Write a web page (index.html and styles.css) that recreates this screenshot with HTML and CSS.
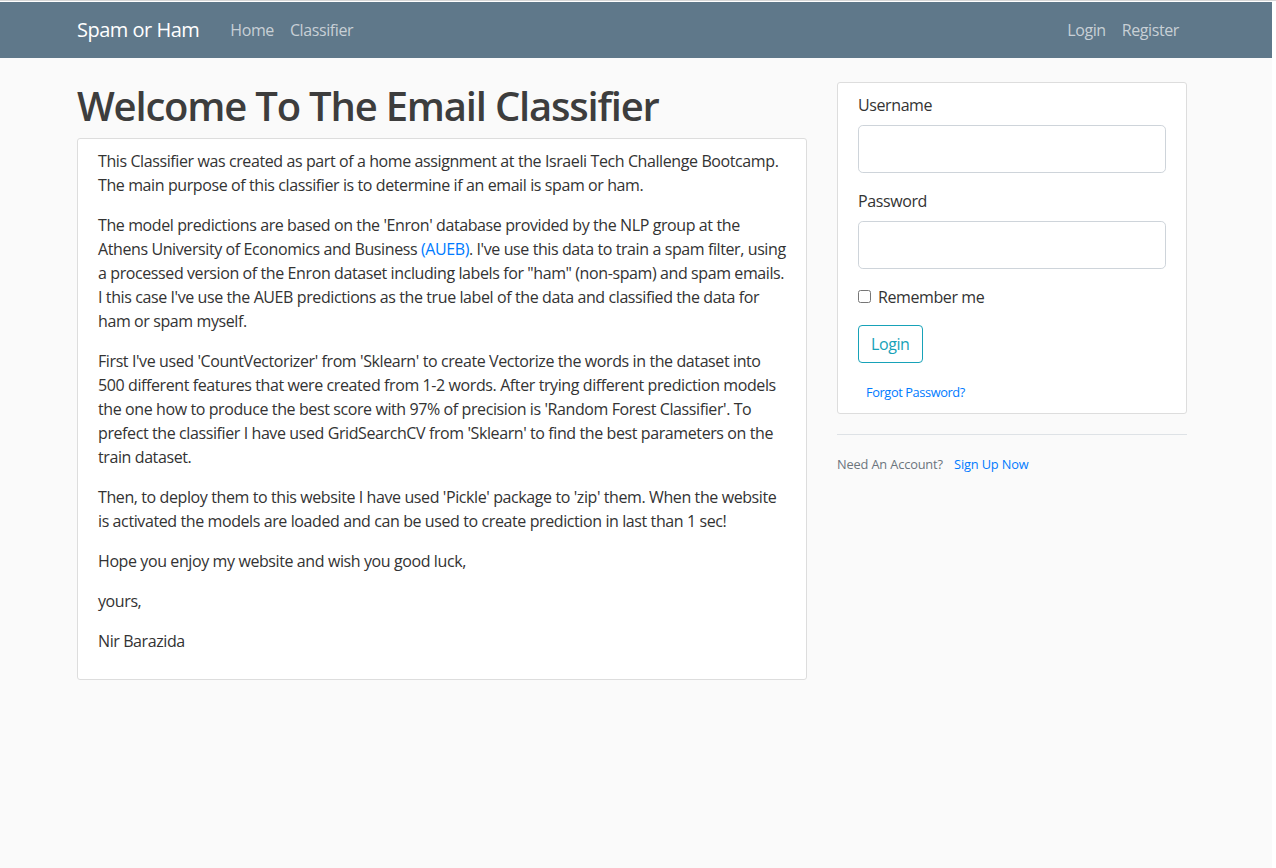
FILE: index.html
```html
<!DOCTYPE html>
<html lang="en">
<head>
<meta charset="utf-8">
<title>Spam or Ham</title>
<link rel="stylesheet" href="styles.css">
</head>
<body>
<div class="page">
  <header class="navbar">
    <div class="nav-inner">
      <a class="brand" href="#">Spam or Ham</a>
      <nav class="nav-left">
        <a class="nav-link" href="#">Home</a>
        <a class="nav-link" href="#">Classifier</a>
      </nav>
      <nav class="nav-right">
        <a class="nav-link" href="#">Login</a>
        <a class="nav-link" href="#">Register</a>
      </nav>
    </div>
  </header>
  <main class="container">
    <div class="col-main">
      <h1 class="title">Welcome To The Email Classifier</h1>
      <div class="content-section">
        <p>This Classifier was created as part of a home assignment at the Israeli Tech Challenge Bootcamp. The main purpose of this classifier is to determine if an email is spam or ham.</p>
        <p>The model predictions are based on the 'Enron' database provided by the NLP group at the Athens University of Economics and Business <a href="#">(AUEB)</a>. I've use this data to train a spam filter, using a processed version of the Enron dataset including labels for "ham" (non-spam) and spam emails. I this case I've use the AUEB predictions as the true label of the data and classified the data for ham or spam myself.</p>
        <p>First I've used 'CountVectorizer' from 'Sklearn' to create Vectorize the words in the dataset into 500 different features that were created from 1-2 words. After trying different prediction models the one how to produce the best score with 97% of precision is 'Random Forest Classifier'. To prefect the classifier I have used GridSearchCV from 'Sklearn' to find the best parameters on the train dataset.</p>
        <p>Then, to deploy them to this website I have used 'Pickle' package to 'zip' them. When the website is activated the models are loaded and can be used to create prediction in last than 1 sec!</p>
        <p>Hope you enjoy my website and wish you good luck,</p>
        <p>yours,</p>
        <p>Nir Barazida</p>
      </div>
    </div>
    <aside class="col-side">
      <div class="content-section">
        <form class="login-form">
          <div class="form-group">
            <label class="form-label" for="username">Username</label>
            <input class="form-control" id="username" type="text">
          </div>
          <div class="form-group">
            <label class="form-label" for="password">Password</label>
            <input class="form-control" id="password" type="password">
          </div>
          <div class="form-group form-check">
            <input class="check-input" id="remember" type="checkbox">
            <label class="check-label" for="remember">Remember me</label>
          </div>
          <div class="form-group">
            <button class="btn-outline" type="button">Login</button>
          </div>
          <div class="forgot"><small><a href="#">Forgot Password?</a></small></div>
        </form>
      </div>
      <div class="account">
        <small class="muted">Need An Account? <a class="signup" href="#">Sign Up Now</a></small>
      </div>
    </aside>
  </main>
</div>
</body>
</html>
```

FILE: styles.css
```css
* { box-sizing: border-box; }
html { background: #fff; }
body {
  margin: 0;
  border-top: 1px solid #d6d6d6;
  font-family: "Open Sans", "Noto Sans", sans-serif;
  font-size: 16px;
  line-height: 1.5;
  letter-spacing: -0.4px;
  color: #333;
}
a { text-decoration: none; }
.page {
  width: 1272px;
  min-height: 866px;
  margin-top: 1px;
  background: #fafafa;
}
.navbar {
  background: #5f788a;
  height: 56px;
}
.nav-inner {
  width: 1110px;
  margin-left: 77px;
  height: 56px;
  display: flex;
  align-items: center;
}
.brand {
  color: #fff;
  font-size: 20px;
  letter-spacing: -0.5px;
  margin-right: 23px;
}
.nav-left, .nav-right { display: flex; }
.nav-right { margin-left: auto; }
.nav-link {
  color: rgba(255,255,255,0.66);
  padding: 8px;
}
.container {
  width: 1140px;
  margin-left: 62px;
  padding-top: 24px;
  display: flex;
  align-items: flex-start;
}
.col-main { width: 760px; padding: 0 15px; }
.col-side { width: 380px; padding: 0 15px; }
.title {
  margin: 0 0 8px;
  font-size: 40px;
  line-height: 48px;
  font-weight: 600;
  letter-spacing: -1.2px;
  color: #3d3d3d;
}
.content-section {
  background: #fff;
  border: 1px solid #ddd;
  border-radius: 3px;
  padding: 10px 20px;
  margin-bottom: 20px;
}
.content-section p { margin: 0 0 16px; }
.content-section a { color: #007bff; }
.form-group { margin-bottom: 16px; }
.form-label { display: inline-block; margin-bottom: 8px; }
.form-control {
  display: block;
  width: 100%;
  height: 48px;
  padding: 8px 16px;
  font-size: 20px;
  border: 1px solid #ced4da;
  border-radius: 4.8px;
  background: #fff;
}
.form-check { position: relative; padding-left: 20px; }
.check-input {
  position: absolute;
  left: 0;
  top: 5px;
  margin: 0;
  width: 13px;
  height: 13px;
}
.btn-outline {
  font-family: inherit;
  font-size: 16px;
  line-height: 24px;
  letter-spacing: -0.4px;
  color: #17a2b8;
  background: transparent;
  border: 1px solid #17a2b8;
  border-radius: 4px;
  padding: 6px 12px;
}
.forgot { padding-left: 8px; }
.forgot small { font-size: 12.8px; }
.account {
  border-top: 1px solid #dee2e6;
  padding-top: 16px;
}
.muted { color: #6c757d; font-size: 12.8px; letter-spacing: -0.15px; }
.signup { color: #007bff; margin-left: 8px; }
```
